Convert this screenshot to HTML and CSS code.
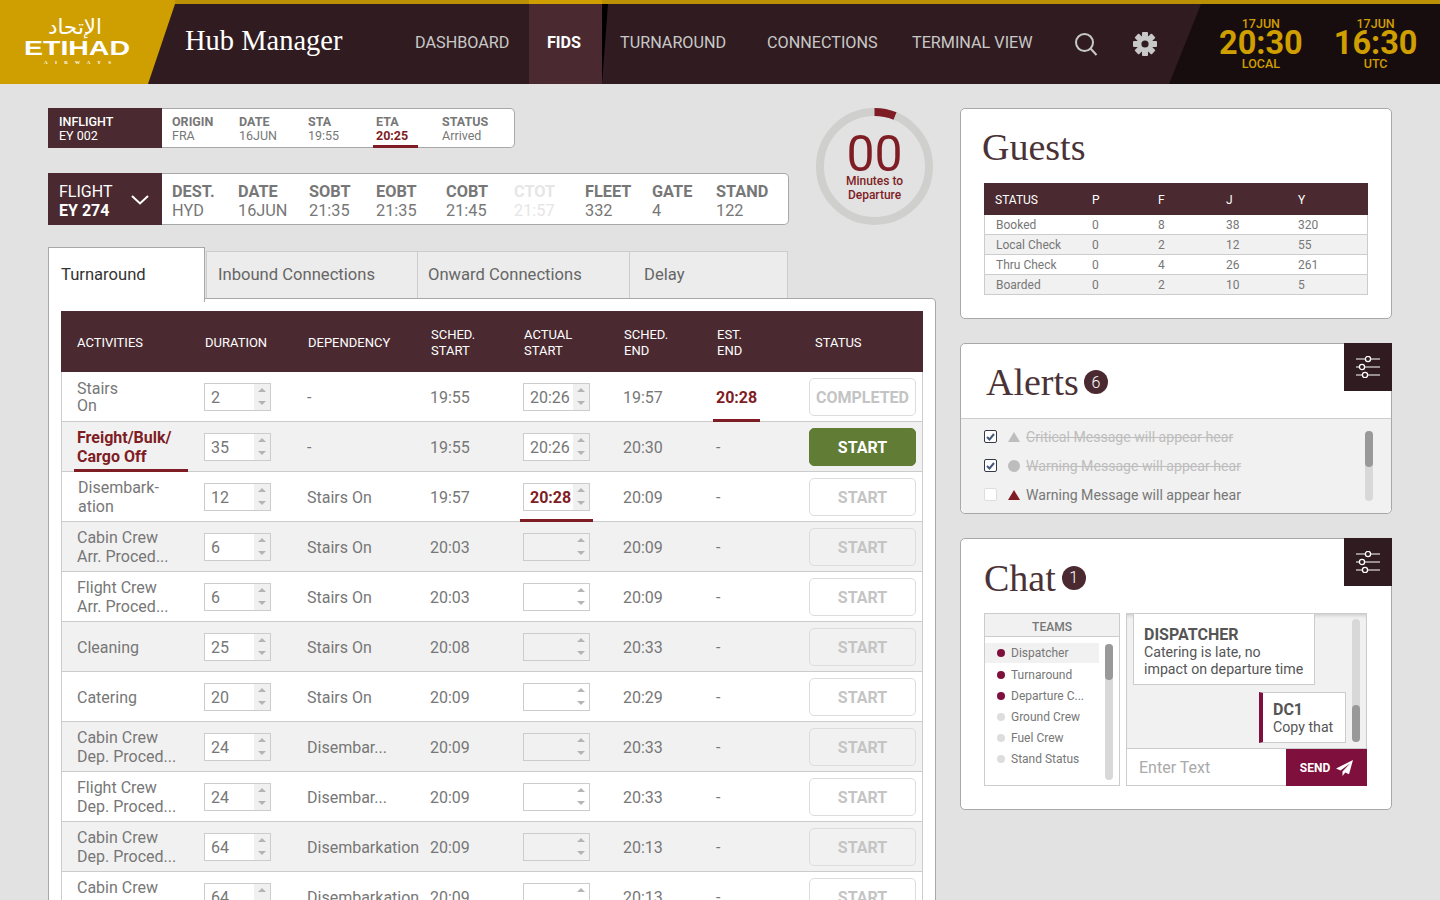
FILE: index.html
```html
<!DOCTYPE html>
<html lang="en">
<head>
  <meta charset="UTF-8" />
  <title>Hub Manager</title>
  <link rel="stylesheet" href="styles.css">
</head>
<body>
  <!-- header -->
  <header class="topbar">
    <div class="logo">
      <svg width="175" height="80" viewBox="0 0 175 80">
        <text class="logo-ar" x="48" y="30" textLength="54" lengthAdjust="spacingAndGlyphs">الإتحاد</text>
        <text class="logo-en" x="24" y="51" textLength="106" lengthAdjust="spacingAndGlyphs">ETIHAD</text>
        <text class="logo-sub" x="44" y="60" textLength="67">AIRWAYS</text>
      </svg>
    </div>
    <div class="app-title">Hub Manager</div>
    <nav class="nav">
      <a class="nav-item nav-dash">DASHBOARD</a>
      <a class="nav-item nav-fids">FIDS</a>
      <a class="nav-item nav-turn">TURNAROUND</a>
      <a class="nav-item nav-conn">CONNECTIONS</a>
      <a class="nav-item nav-term">TERMINAL VIEW</a>
    </nav>
    <svg class="icon-search" width="26" height="26" viewBox="0 0 26 26">
      <circle cx="11.5" cy="11.5" r="8.5" />
      <line x1="17.5" y1="17.5" x2="23.5" y2="24" />
    </svg>
    <svg class="icon-gear" width="26" height="26" viewBox="0 0 26 26">
      <circle cx="13" cy="13" r="8" />
      <g>
        <rect x="10" y="1" width="6" height="24" rx="1" />
        <rect x="10" y="1" width="6" height="24" rx="1" transform="rotate(45 13 13)" />
        <rect x="10" y="1" width="6" height="24" rx="1" transform="rotate(90 13 13)" />
        <rect x="10" y="1" width="6" height="24" rx="1" transform="rotate(135 13 13)" />
      </g>
      <circle class="gear-hole" cx="13" cy="13" r="3.6" />
    </svg>
    <div class="clocks">
      <div class="clock">
        <div class="clock-date">17JUN</div>
        <div class="clock-time">20:30</div>
        <div class="clock-zone">LOCAL</div>
      </div>
      <div class="clock">
        <div class="clock-date">17JUN</div>
        <div class="clock-time">16:30</div>
        <div class="clock-zone">UTC</div>
      </div>
    </div>
  </header>

  <main class="page">
    <section class="left">
      <div class="summary">
        <div class="bars">
          <!-- inflight -->
          <div class="bar bar-small">
            <div class="bar-head"><b>INFLIGHT</b><span>EY 002</span></div>
            <div class="field f-origin"><b>ORIGIN</b><span>FRA</span></div>
            <div class="field f-date"><b>DATE</b><span>16JUN</span></div>
            <div class="field f-sta"><b>STA</b><span>19:55</span></div>
            <div class="field f-eta"><b>ETA</b><span class="red">20:25</span></div>
            <div class="field"><b>STATUS</b><span>Arrived</span></div>
          </div>
          <!-- flight -->
          <div class="bar bar-large">
            <div class="bar-head">
              <span>FLIGHT</span><b>EY 274</b>
              <svg class="chevron" width="18" height="10" viewBox="0 0 18 10"><path d="M1 1l8 7.5L17 1" /></svg>
            </div>
            <div class="field w66"><b>DEST.</b><span>HYD</span></div>
            <div class="field w71"><b>DATE</b><span>16JUN</span></div>
            <div class="field w67"><b>SOBT</b><span>21:35</span></div>
            <div class="field w70"><b>EOBT</b><span>21:35</span></div>
            <div class="field w68"><b>COBT</b><span>21:45</span></div>
            <div class="field w71 faded"><b>CTOT</b><span>21:57</span></div>
            <div class="field w67"><b>FLEET</b><span>332</span></div>
            <div class="field w64"><b>GATE</b><span>4</span></div>
            <div class="field"><b>STAND</b><span>122</span></div>
          </div>
        </div>
        <div class="countdown">
          <svg width="117" height="117" viewBox="0 0 117 117">
            <circle class="ring" cx="58.5" cy="58.5" r="54.5" />
            <path class="ring-arc" d="M58.5 4A54.5 54.5 0 0 1 79 8" />
          </svg>
          <div class="countdown-text">
            <div class="countdown-num">00</div>
            <div class="countdown-label">Minutes to<br>Departure</div>
          </div>
        </div>
      </div>

      <div class="tabs">
        <div class="tab tab-active">Turnaround</div>
        <div class="tab t-inbound">Inbound Connections</div>
        <div class="tab t-onward">Onward Connections</div>
        <div class="tab t-delay">Delay</div>
      </div>

      <div class="panel">
        <table class="activity">
          <colgroup>
            <col class="c1"><col class="c2"><col class="c3"><col class="c4"><col class="c5"><col class="c6"><col class="c7"><col class="c8">
          </colgroup>
          <thead>
            <tr>
              <th>ACTIVITIES</th><th>DURATION</th><th>DEPENDENCY</th><th>SCHED.<br>START</th><th>ACTUAL<br>START</th><th>SCHED.<br>END</th><th>EST.<br>END</th><th class="th-status">STATUS</th>
            </tr>
          </thead>
          <tbody>
            <tr>
              <td class="tight">Stairs<br>On</td>
              <td><div class="spin"><div class="val">2</div><div class="arrows"><i></i><i></i></div></div></td>
              <td>-</td><td>19:55</td>
              <td><div class="spin"><div class="val">20:26</div><div class="arrows"><i></i><i></i></div></div></td>
              <td>19:57</td>
              <td class="marked mark-est"><b class="red">20:28</b></td>
              <td><button class="btn">COMPLETED</button></td>
            </tr>
            <tr>
              <td class="marked mark-act"><b class="red">Freight/Bulk/<br>Cargo Off</b></td>
              <td><div class="spin"><div class="val">35</div><div class="arrows"><i></i><i></i></div></div></td>
              <td>-</td><td>19:55</td>
              <td><div class="spin"><div class="val">20:26</div><div class="arrows"><i></i><i></i></div></div></td>
              <td>20:30</td><td>-</td>
              <td><button class="btn btn-go">START</button></td>
            </tr>
            <tr>
              <td class="nudge">Disembark-<br>ation</td>
              <td><div class="spin"><div class="val">12</div><div class="arrows"><i></i><i></i></div></div></td>
              <td>Stairs On</td><td>19:57</td>
              <td class="marked mark-start"><div class="spin"><div class="val"><b class="red">20:28</b></div><div class="arrows"><i></i><i></i></div></div></td>
              <td>20:09</td><td>-</td>
              <td><button class="btn">START</button></td>
            </tr>
            <tr>
              <td>Cabin Crew<br>Arr. Proced...</td>
              <td><div class="spin"><div class="val">6</div><div class="arrows"><i></i><i></i></div></div></td>
              <td>Stairs On</td><td>20:03</td>
              <td><div class="spin empty"><div class="val"></div><div class="arrows"><i></i><i></i></div></div></td>
              <td>20:09</td><td>-</td>
              <td><button class="btn">START</button></td>
            </tr>
            <tr>
              <td>Flight Crew<br>Arr. Proced...</td>
              <td><div class="spin"><div class="val">6</div><div class="arrows"><i></i><i></i></div></div></td>
              <td>Stairs On</td><td>20:03</td>
              <td><div class="spin empty"><div class="val"></div><div class="arrows"><i></i><i></i></div></div></td>
              <td>20:09</td><td>-</td>
              <td><button class="btn">START</button></td>
            </tr>
            <tr>
              <td>Cleaning</td>
              <td><div class="spin"><div class="val">25</div><div class="arrows"><i></i><i></i></div></div></td>
              <td>Stairs On</td><td>20:08</td>
              <td><div class="spin empty"><div class="val"></div><div class="arrows"><i></i><i></i></div></div></td>
              <td>20:33</td><td>-</td>
              <td><button class="btn">START</button></td>
            </tr>
            <tr>
              <td>Catering</td>
              <td><div class="spin"><div class="val">20</div><div class="arrows"><i></i><i></i></div></div></td>
              <td>Stairs On</td><td>20:09</td>
              <td><div class="spin empty"><div class="val"></div><div class="arrows"><i></i><i></i></div></div></td>
              <td>20:29</td><td>-</td>
              <td><button class="btn">START</button></td>
            </tr>
            <tr>
              <td>Cabin Crew<br>Dep. Proced...</td>
              <td><div class="spin"><div class="val">24</div><div class="arrows"><i></i><i></i></div></div></td>
              <td>Disembar...</td><td>20:09</td>
              <td><div class="spin empty"><div class="val"></div><div class="arrows"><i></i><i></i></div></div></td>
              <td>20:33</td><td>-</td>
              <td><button class="btn">START</button></td>
            </tr>
            <tr>
              <td>Flight Crew<br>Dep. Proced...</td>
              <td><div class="spin"><div class="val">24</div><div class="arrows"><i></i><i></i></div></div></td>
              <td>Disembar...</td><td>20:09</td>
              <td><div class="spin empty"><div class="val"></div><div class="arrows"><i></i><i></i></div></div></td>
              <td>20:33</td><td>-</td>
              <td><button class="btn">START</button></td>
            </tr>
            <tr>
              <td>Cabin Crew<br>Dep. Proced...</td>
              <td><div class="spin"><div class="val">64</div><div class="arrows"><i></i><i></i></div></div></td>
              <td>Disembarkation</td><td>20:09</td>
              <td><div class="spin empty"><div class="val"></div><div class="arrows"><i></i><i></i></div></div></td>
              <td>20:13</td><td>-</td>
              <td><button class="btn">START</button></td>
            </tr>
            <tr>
              <td>Cabin Crew<br>Dep. Proced...</td>
              <td><div class="spin"><div class="val">64</div><div class="arrows"><i></i><i></i></div></div></td>
              <td>Disembarkation</td><td>20:09</td>
              <td><div class="spin empty"><div class="val"></div><div class="arrows"><i></i><i></i></div></div></td>
              <td>20:13</td><td>-</td>
              <td><button class="btn">START</button></td>
            </tr>
          </tbody>
        </table>
      </div>
    </section>

    <aside class="right">
      <!-- guests -->
      <div class="card card-guests">
        <h2 class="card-title">Guests</h2>
        <table class="guests">
          <thead><tr><th>STATUS</th><th>P</th><th>F</th><th>J</th><th>Y</th></tr></thead>
          <tbody>
            <tr><td>Booked</td><td>0</td><td>8</td><td>38</td><td>320</td></tr>
            <tr><td>Local Check</td><td>0</td><td>2</td><td>12</td><td>55</td></tr>
            <tr><td>Thru Check</td><td>0</td><td>4</td><td>26</td><td>261</td></tr>
            <tr><td>Boarded</td><td>0</td><td>2</td><td>10</td><td>5</td></tr>
          </tbody>
        </table>
      </div>

      <!-- alerts -->
      <div class="card card-alerts">
        <button class="filter">
          <svg width="24" height="22" viewBox="0 0 24 22"><path d="M0 3h24M0 11h24M0 19h24" /><circle cx="12" cy="3" r="2.6" /><circle cx="6" cy="11" r="2.6" /><circle cx="9" cy="19" r="2.6" /></svg>
        </button>
        <div class="alerts-head">
          <h2 class="card-title">Alerts</h2><span class="badge">6</span>
        </div>
        <div class="alerts-body">
          <div class="alert done">
            <span class="check on"><svg width="9" height="8" viewBox="0 0 9 8"><path d="M1 4l2.5 2.5L8 1" /></svg></span>
            <span class="tri grey"></span><span class="alert-text">Critical Message will appear hear</span>
          </div>
          <div class="alert done">
            <span class="check on"><svg width="9" height="8" viewBox="0 0 9 8"><path d="M1 4l2.5 2.5L8 1" /></svg></span>
            <span class="dot-big"></span><span class="alert-text">Warning Message will appear hear</span>
          </div>
          <div class="alert">
            <span class="check"></span>
            <span class="tri"></span><span class="alert-text">Warning Message will appear hear</span>
          </div>
          <div class="scroll scroll-alerts"><div class="thumb"></div></div>
        </div>
      </div>

      <!-- chat -->
      <div class="card card-chat">
        <button class="filter">
          <svg width="24" height="22" viewBox="0 0 24 22"><path d="M0 3h24M0 11h24M0 19h24" /><circle cx="12" cy="3" r="2.6" /><circle cx="6" cy="11" r="2.6" /><circle cx="9" cy="19" r="2.6" /></svg>
        </button>
        <div class="chat-head">
          <h2 class="card-title">Chat</h2><span class="badge">1</span>
        </div>
        <div class="chat-body">
          <div class="teams">
            <div class="teams-head">TEAMS</div>
            <ul class="team-list">
              <li class="team selected"><i></i>Dispatcher</li>
              <li class="team"><i></i>Turnaround</li>
              <li class="team"><i></i>Departure C...</li>
              <li class="team off"><i></i>Ground Crew</li>
              <li class="team off"><i></i>Fuel Crew</li>
              <li class="team off"><i></i>Stand Status</li>
            </ul>
            <div class="scroll scroll-teams"><div class="thumb"></div></div>
          </div>
          <div class="messages">
            <div class="msg-area">
              <div class="msg msg-in"><b>DISPATCHER</b><span>Catering is late, no<br>impact on departure time</span></div>
              <div class="msg msg-out"><b>DC1</b><span>Copy that</span></div>
              <div class="scroll scroll-msgs"><div class="thumb"></div></div>
            </div>
            <div class="msg-input">
              <div class="placeholder">Enter Text</div>
              <button class="send">SEND
                <svg width="17" height="16" viewBox="0 0 17 16"><path d="M17 0L0 8.5l4.5 2L14 3.5 6.5 11.5V16l2.8-3.4 3.7 1.6z" /></svg>
              </button>
            </div>
          </div>
        </div>
      </div>
    </aside>
  </main>
</body>
</html>
```

FILE: styles.css
```css
:root {
  --bg: #e2e2e2;
  --dark: #301c20;
  --plum: #4a2a30;
  --gold: #cf9e00;
  --red: #7f1d25;
  --wine: #7f0f3c;
  --line: #cccccc;
  --edge: #a8a8a8;
  --text: #777777;
}
* {
  box-sizing: border-box;
  margin: 0;
  padding: 0;
}
html, body {
  height: 900px;
  overflow: hidden;
}
body {
  font-family: Roboto, "Liberation Sans", sans-serif;
  background-color: var(--bg);
  color: var(--text);
}
b {
  font-weight: 700;
}
.red {
  color: var(--red);
}

/* header */
.topbar {
  display: flex;
  align-items: center;
  height: 84px;
  background-color: var(--dark);
  border-top: 4px solid #bb9005;
  position: relative;
}
.logo {
  flex: none;
  width: 175px;
  height: 84px;
  margin-top: -4px;
  padding-top: 4px;
  background-color: var(--gold);
  clip-path: polygon(0 0, 100% 0, 100% 4px, 148px 100%, 0 100%);
}
.logo text {
  fill: #ffffff;
}
.logo-ar {
  font-family: "DejaVu Sans", sans-serif;
  font-size: 21px;
  font-weight: 400;
}
.logo-en {
  font-family: "Liberation Sans", sans-serif;
  font-size: 20px;
  font-weight: 700;
}
.logo-sub {
  font-family: "Liberation Serif", serif;
  font-size: 5px;
  font-weight: 700;
}
.app-title {
  width: 230px;
  margin-left: 10px;
  padding-bottom: 7px;
  font-family: "Liberation Serif", serif;
  font-size: 28.5px;
  color: #ffffff;
}
.nav {
  display: flex;
  align-self: stretch;
}
.nav-item {
  display: flex;
  align-items: center;
  padding-bottom: 4px;
  font-size: 16.2px;
  white-space: nowrap;
  color: #c8c8c8;
}
.nav-dash {
  width: 114px;
}
.nav-fids {
  position: relative;
  justify-content: center;
  width: 73px;
  padding-right: 3px;
  background-color: var(--plum);
  margin-top: -4px;
  border-top: 4px solid var(--gold);
  font-weight: 700;
  color: #ffffff;
}
.nav-fids::after {
  content: "";
  position: absolute;
  left: 100%;
  top: 0;
  width: 6px;
  height: 100%;
  background-color: #000000;
  clip-path: polygon(0 0, 100% 0, 0 100%);
}
.nav-turn {
  margin-left: 18px;
  width: 147px;
}
.nav-conn {
  width: 145px;
}
.nav-term {
  width: 121px;
}
.icon-search {
  flex: none;
  margin-left: 40px;
  fill: none;
  stroke: #c8c8c8;
  stroke-width: 2;
}
.icon-gear {
  flex: none;
  margin-left: 33px;
  fill: #c8c8c8;
}
.gear-hole {
  fill: var(--dark);
}
.clocks {
  position: absolute;
  right: 0;
  top: 0;
  bottom: 0;
  width: 271px;
  display: flex;
  padding-left: 50px;
  background-color: #170d0e;
  clip-path: polygon(32px 0, 100% 0, 100% 100%, 0 100%);
  color: var(--gold);
  text-align: center;
}
.clock {
  width: 84px;
  margin-right: 31px;
  padding-top: 13px;
}
.clock-date,
.clock-zone {
  font-size: 12.5px;
  line-height: 13px;
  font-weight: 500;
}
.clock-time {
  font-size: 32.5px;
  line-height: 27px;
  font-weight: 700;
}

/* layout */
.page {
  display: grid;
  grid-template-columns: 888px 432px;
  gap: 24px;
  padding: 24px 48px 0;
}
.summary {
  display: flex;
}
.bars {
  width: 741px;
}

/* flight bars */
.bar {
  display: flex;
  background-color: #ffffff;
  border: 1px solid var(--edge);
  border-radius: 0 5px 5px 0;
  border-left: none;
}
.bar-head {
  flex: none;
  display: flex;
  flex-direction: column;
  width: 114px;
  margin: -1px 0;
  background-color: var(--plum);
  color: #ffffff;
  position: relative;
}
.field {
  display: flex;
  flex-direction: column;
  position: relative;
}
.bar-small {
  width: 467px;
  height: 40px;
  font-size: 12.5px;
  line-height: 14px;
}
.bar-small .bar-head {
  padding: 7px 0 0 11px;
}
.bar-small .bar-head b {
  font-weight: 500;
}
.bar-small .field {
  padding-top: 6px;
}
.f-origin {
  width: 67px;
  margin-left: 10px;
}
.f-date {
  width: 69px;
}
.f-sta {
  width: 68px;
}
.f-eta {
  width: 66px;
}
.f-eta::after {
  content: "";
  position: absolute;
  left: -3px;
  bottom: -1px;
  width: 45px;
  height: 3px;
  background-color: var(--red);
}
.f-eta span {
  font-weight: 700;
}
.bar-large {
  width: 741px;
  height: 52px;
  margin-top: 25px;
  font-size: 16.3px;
  line-height: 19px;
}
.bar-large .bar-head {
  padding: 9px 0 0 11px;
  font-size: 16px;
}
.bar-large .field {
  padding-top: 8px;
}
.bar-large .field:nth-child(2) {
  margin-left: 10px;
}
.chevron {
  position: absolute;
  left: 83px;
  top: 22px;
  fill: none;
  stroke: #ffffff;
  stroke-width: 2;
}
.w64 { width: 64px; }
.w66 { width: 66px; }
.w67 { width: 67px; }
.w68 { width: 68px; }
.w70 { width: 70px; }
.w71 { width: 71px; }
.faded {
  color: #e6e6e6;
}

/* countdown */
.countdown {
  position: relative;
  width: 117px;
  height: 117px;
  margin-left: 27px;
}
.ring {
  fill: none;
  stroke: #cfcfcd;
  stroke-width: 8;
}
.ring-arc {
  fill: none;
  stroke: var(--red);
  stroke-width: 8;
}
.countdown-text {
  position: absolute;
  left: 0;
  right: 0;
  top: 26px;
  text-align: center;
  color: var(--red);
}
.countdown-num {
  font-size: 50px;
  line-height: 40px;
}
.countdown-label {
  font-size: 12px;
  line-height: 14px;
  font-weight: 500;
}

/* tabs */
.tabs {
  display: flex;
  height: 51px;
  margin-top: 22px;
  font-size: 16.6px;
}
.tab {
  display: flex;
  align-items: center;
  height: 47px;
  margin-top: 4px;
  padding: 0 0 2px 11px;
  background-color: #ececec;
  border: 1px solid var(--line);
  border-left: none;
  border-bottom: none;
  color: #666666;
}
.tab-active {
  position: relative;
  z-index: 1;
  width: 157px;
  height: 55px;
  margin-top: 0;
  padding: 0 0 2px 12px;
  background-color: #ffffff;
  border: 1px solid var(--edge);
  border-bottom: none;
  color: #333333;
}
.t-inbound {
  width: 212px;
  margin-left: 1px;
  border-left: 1px solid var(--line);
}
.t-onward {
  width: 212px;
  padding-left: 10px;
}
.t-delay {
  width: 158px;
  padding-left: 14px;
}
.panel {
  height: 620px;
  padding: 12px 12px 0;
  background-color: #ffffff;
  border: 1px solid var(--edge);
  border-radius: 0 4px 0 0;
}

/* activity table */
.activity {
  width: 862px;
  table-layout: fixed;
  border-collapse: separate;
  border-spacing: 0;
  font-size: 16px;
}
.c1 { width: 143px; }
.c2 { width: 103px; }
.c3 { width: 123px; }
.c4 { width: 93px; }
.c5 { width: 100px; }
.c6 { width: 93px; }
.c7 { width: 93px; }
.c8 { width: 114px; }
.activity th {
  height: 61px;
  padding: 2px 0 0 1px;
  background-color: var(--plum);
  color: #ffffff;
  font-size: 13px;
  line-height: 16px;
  font-weight: 400;
  text-align: left;
}
.activity th:first-child {
  padding-left: 16px;
}
.activity .th-status {
  padding-left: 6px;
}
.activity td {
  height: 50px;
  padding-top: 1px;
  border-bottom: 1px solid var(--line);
  line-height: 19px;
}
.activity td:first-child {
  padding-left: 15px;
  border-left: 1px solid var(--line);
}
.activity td:last-child {
  border-right: 1px solid var(--line);
}
.activity td.nudge {
  padding-left: 16px;
}
.activity td.tight {
  line-height: 17px;
}
.activity tbody tr:nth-child(even) {
  background-color: #f1f1f1;
}
.marked {
  position: relative;
}
.marked::after {
  content: "";
  position: absolute;
  bottom: -1px;
  height: 3px;
  background-color: var(--red);
}
.mark-act::after {
  left: 12px;
  width: 114px;
}
.mark-est::after {
  left: -3px;
  width: 47px;
}
.mark-start::after {
  left: -3px;
  width: 73px;
}
.spin {
  display: flex;
  width: 67px;
  height: 28px;
  background-color: #ffffff;
  border: 1px solid var(--line);
}
.spin.empty {
  background-color: transparent;
}
.val {
  flex: 1;
  padding-left: 6px;
  line-height: 28px;
}
.arrows {
  flex: none;
  display: flex;
  flex-direction: column;
  justify-content: space-between;
  align-items: center;
  width: 16px;
  padding: 4px 0 5px;
  background-color: #f0f0f0;
}
.spin.empty .arrows {
  background-color: transparent;
}
.arrows i {
  width: 0;
  height: 0;
  border-left: 4px solid transparent;
  border-right: 4px solid transparent;
  border-bottom: 4px solid #b4b4b4;
}
.arrows i:last-child {
  border-bottom: none;
  border-top: 4px solid #b4b4b4;
}
.btn {
  display: block;
  width: 107px;
  height: 38px;
  margin-top: -1px;
  padding-top: 2px;
  background: transparent;
  border: 1px solid #dcdcdc;
  border-radius: 5px;
  font-family: inherit;
  font-size: 16px;
  font-weight: 700;
  color: #c4c4c4;
}
.btn-go {
  background-color: #607c35;
  border-color: #607c35;
  color: #ffffff;
}

/* cards */
.right {
  display: flex;
  flex-direction: column;
  gap: 24px;
}
.card {
  position: relative;
  background-color: #ffffff;
  border: 1px solid var(--edge);
  border-radius: 5px;
}
.card-title {
  font-family: "Liberation Serif", serif;
  font-size: 38px;
  line-height: 44px;
  font-weight: 400;
  color: #4a3236;
}
.badge {
  display: flex;
  align-items: center;
  justify-content: center;
  width: 24px;
  height: 24px;
  border-radius: 50%;
  background-color: var(--plum);
  color: #ffffff;
  font-size: 16px;
  font-weight: 300;
}
.filter {
  position: absolute;
  right: -1px;
  top: -1px;
  display: flex;
  align-items: center;
  justify-content: center;
  width: 48px;
  height: 48px;
  background-color: var(--dark);
  border: none;
}
.filter path {
  stroke: #ffffff;
  stroke-width: 1.2;
  fill: none;
}
.filter circle {
  fill: var(--dark);
  stroke: #ffffff;
  stroke-width: 1.3;
}
.scroll {
  position: absolute;
  width: 8px;
  background-color: #d8d8d8;
  border-radius: 4px;
}
.thumb {
  height: 36px;
  background-color: #999999;
  border-radius: 4px;
}

/* guests */
.card-guests {
  height: 211px;
  padding: 16px 23px 0;
}
.card-guests .card-title {
  margin-left: -2px;
}
.guests {
  width: 384px;
  margin-top: 14px;
  table-layout: fixed;
  border-collapse: separate;
  border-spacing: 0;
  font-size: 12px;
}
.guests th {
  height: 32px;
  padding: 1px 0 0;
  background-color: var(--plum);
  color: #ffffff;
  font-weight: 400;
  text-align: left;
}
.guests td {
  height: 20px;
  padding-top: 1px;
  border-bottom: 1px solid var(--line);
}
.guests th:first-child,
.guests td:first-child {
  width: 108px;
  padding-left: 11px;
}
.guests th:nth-child(2), .guests td:nth-child(2) { width: 66px; }
.guests th:nth-child(3), .guests td:nth-child(3) { width: 68px; }
.guests th:nth-child(4), .guests td:nth-child(4) { width: 72px; }
.guests td:first-child {
  border-left: 1px solid var(--line);
}
.guests td:last-child {
  border-right: 1px solid var(--line);
}
.guests tbody tr:nth-child(even) {
  background-color: #f1f1f1;
}

/* alerts */
.card-alerts {
  height: 171px;
}
.alerts-head {
  display: flex;
  align-items: center;
  gap: 5px;
  height: 74px;
  padding: 2px 0 0 25px;
}
.alerts-body {
  position: relative;
  height: 95px;
  padding: 3px 0 0 23px;
  background-color: #f1f1f1;
  border-top: 1px solid var(--line);
  border-radius: 0 0 5px 5px;
}
.alert {
  display: flex;
  align-items: center;
  height: 29px;
  font-size: 14.1px;
}
.alert.done .alert-text {
  color: #bdbdbd;
  text-decoration: line-through;
}
.check {
  display: flex;
  align-items: center;
  justify-content: center;
  width: 13px;
  height: 13px;
  background-color: #ffffff;
  border: 1px solid #dddddd;
  border-radius: 2px;
}
.check.on {
  border-color: #333a45;
}
.check path {
  fill: none;
  stroke: #46597a;
  stroke-width: 2;
}
.tri {
  width: 0;
  height: 0;
  margin: 0 6px 0 11px;
  border-left: 6px solid transparent;
  border-right: 6px solid transparent;
  border-bottom: 10px solid var(--red);
}
.tri.grey {
  border-bottom-color: #bdbdbd;
}
.dot-big {
  width: 12px;
  height: 12px;
  margin: 0 6px 0 11px;
  border-radius: 50%;
  background-color: #bdbdbd;
}
.scroll-alerts {
  right: 18px;
  top: 12px;
  height: 70px;
}

/* chat */
.card-chat {
  height: 272px;
}
.chat-head {
  display: flex;
  align-items: center;
  gap: 6px;
  height: 74px;
  padding: 3px 0 0 23px;
}
.chat-body {
  display: flex;
  gap: 6px;
  margin-left: 23px;
}
.teams {
  position: relative;
  width: 136px;
  height: 173px;
  background-color: #ffffff;
  border: 1px solid var(--line);
}
.teams-head {
  height: 23px;
  background-color: #f1f1f1;
  border-bottom: 1px solid var(--line);
  font-size: 12px;
  font-weight: 500;
  line-height: 27px;
  text-align: center;
}
.team-list {
  list-style: none;
  padding-top: 6px;
}
.team {
  display: flex;
  align-items: center;
  width: 114px;
  height: 21px;
  padding-left: 12px;
  font-size: 12px;
}
.team i {
  width: 8px;
  height: 8px;
  margin-right: 6px;
  border-radius: 50%;
  background-color: var(--wine);
}
.team.off i {
  background-color: #dddddd;
}
.team.selected {
  height: 20px;
  margin-bottom: 1px;
  background-color: #f1f1f1;
}
.scroll-teams {
  right: 6px;
  top: 30px;
  height: 136px;
}
.messages {
  width: 241px;
  height: 173px;
  background-color: #ffffff;
  border: 1px solid var(--line);
}
.msg-area {
  position: relative;
  height: 135px;
  padding: 0 6px;
  background-color: #f1f1f1;
  border-bottom: 1px solid var(--line);
  box-shadow: inset 0 4px 4px -3px rgba(0, 0, 0, 0.2);
}
.msg {
  background-color: #ffffff;
  border: 1px solid var(--line);
  color: #555555;
  font-size: 14.2px;
  line-height: 17px;
}
.msg b {
  display: block;
  font-size: 16px;
  line-height: 19px;
}
.msg span {
  display: block;
}
.msg-in {
  width: 182px;
  height: 71px;
  padding: 11px 0 0 10px;
  border-top: none;
}
.msg-out {
  width: 87px;
  height: 51px;
  margin: 7px 0 0 126px;
  padding: 7px 0 0 10px;
  border-left: 4px solid var(--wine);
}
.scroll-msgs {
  right: 6px;
  top: 5px;
  height: 123px;
  display: flex;
  align-items: flex-end;
}
.scroll-msgs .thumb {
  width: 8px;
  height: 37px;
}
.msg-input {
  display: flex;
  height: 37px;
  margin-right: -1px;
}
.placeholder {
  flex: 1;
  padding-left: 12px;
  font-size: 16px;
  line-height: 37px;
  color: #aaaaaa;
}
.send {
  display: flex;
  align-items: center;
  justify-content: center;
  gap: 6px;
  width: 81px;
  background-color: var(--wine);
  border: none;
  color: #ffffff;
  font-family: inherit;
  font-size: 12px;
  font-weight: 700;
}
.send svg {
  fill: #ffffff;
}
```
